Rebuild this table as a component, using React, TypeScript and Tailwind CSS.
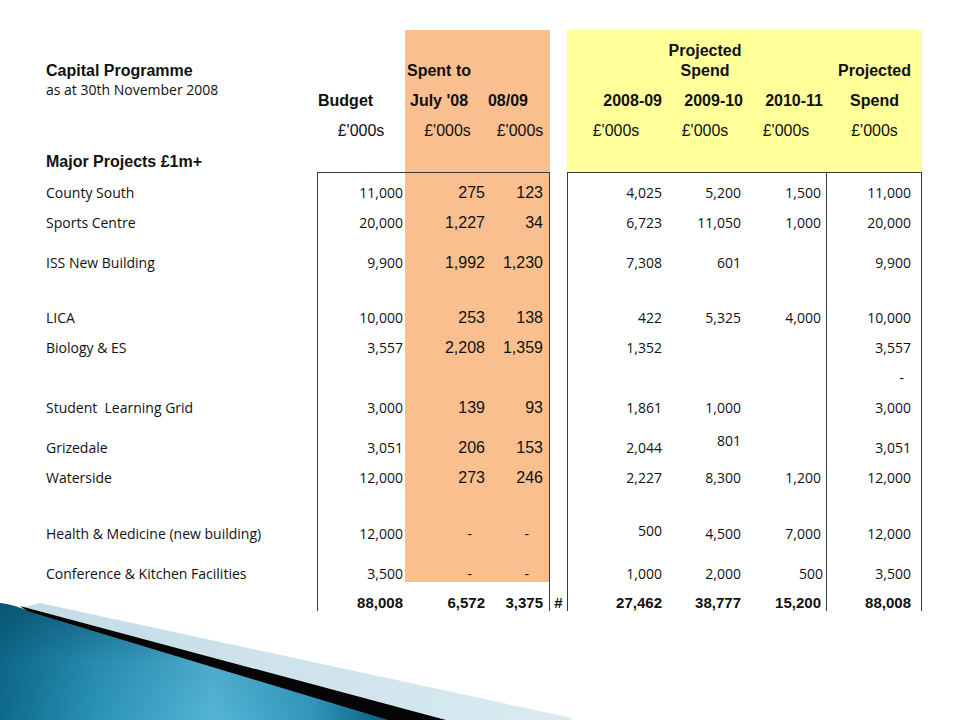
import React from 'react';

const COLS = 'grid grid-cols-[271px_88px_85px_60px_17px_98px_80px_82px_95px]';
const ARIAL = "font-['Liberation_Sans',Arial,sans-serif]";
const CAL = "font-['Open_Sans',sans-serif]";
const OR = 'bg-[#f9bf8f]';
const YE = 'bg-[#ffff99]';
const LINE = 'border-[#3a3a3a]';

type Row = {
  label: string;
  h: string;
  v: string[];
  pad?: Record<number, string>;
  pb?: Record<number, string>;
};

const rows: Row[] = [
  { label: 'County South', h: 'h-[29px]', v: ['11,000', '275', '123', '4,025', '5,200', '1,500', '11,000'] },
  { label: 'Sports Centre', h: 'h-[30px]', v: ['20,000', '1,227', '34', '6,723', '11,050', '1,000', '20,000'] },
  { label: 'ISS New Building', h: 'h-[40px]', v: ['9,900', '1,992', '1,230', '7,308', '601', '', '9,900'] },
  { label: 'LICA', h: 'h-[55px]', v: ['10,000', '253', '138', '422', '5,325', '4,000', '10,000'] },
  { label: 'Biology & ES', h: 'h-[30px]', v: ['3,557', '2,208', '1,359', '1,352', '', '', '3,557'] },
  { label: '', h: 'h-[30px]', v: ['', '', '', '', '', '', '-'], pad: { 6: 'pr-[17px]' } },
  { label: 'Student  Learning Grid', h: 'h-[30px]', v: ['3,000', '139', '93', '1,861', '1,000', '', '3,000'] },
  { label: 'Grizedale', h: 'h-[40px]', v: ['3,051', '206', '153', '2,044', '801', '', '3,051'], pb: { 4: 'pb-[7px]' } },
  { label: 'Waterside', h: 'h-[30px]', v: ['12,000', '273', '246', '2,227', '8,300', '1,200', '12,000'] },
  {
    label: 'Health & Medicine (new building)',
    h: 'h-[56px]',
    v: ['12,000', '-', '-', '500', '4,500', '7,000', '12,000'],
    pad: { 1: 'pr-[18px]', 2: 'pr-[20px]' },
    pb: { 3: 'pb-[3px]' },
  },
  {
    label: 'Conference & Kitchen Facilities',
    h: 'h-[40px]',
    v: ['3,500', '-', '-', '1,000', '2,000', '500', '3,500'],
    pad: { 1: 'pr-[18px]', 2: 'pr-[20px]', 5: 'pr-[3px]' },
  },
];

const basePad = ['pr-[2px]', 'pr-[5px]', 'pr-[6px]', 'pr-[3px]', 'pr-[4px]', 'pr-[5px]', 'pr-[10px]'];
const colCls = [
  `border-l ${LINE}`,
  OR,
  `${OR} border-r ${LINE}`,
  `border-l ${LINE}`,
  '',
  `border-r ${LINE}`,
  `border-r ${LINE}`,
];

function BodyRow({ r, first }: { r: Row; first: boolean }) {
  const cells = r.v.map((val, i) => {
    const pad = r.pad && r.pad[i] ? r.pad[i] : basePad[i];
    const pb = r.pb && r.pb[i] ? r.pb[i] : '';
    const big = (i === 1 || i === 2) && val !== '-';
    const font = big ? `${ARIAL} text-[16px]` : `${CAL} text-[14px]`;
    const top = first ? `border-t ${LINE}` : '';
    return (
      <div
        key={i}
        className={`flex items-end justify-end leading-[16px] text-[#111] ${colCls[i]} ${top} ${pad} ${pb} ${font}`}
      >
        <span>{val}</span>
      </div>
    );
  });
  return (
    <div className={`${COLS} ${r.h}`}>
      <div className={`flex items-end leading-[16px] text-[14px] text-[#111] whitespace-pre ${CAL}`}>
        <span>{r.label}</span>
      </div>
      {cells.slice(0, 3)}
      <div />
      {cells.slice(3)}
    </div>
  );
}

function TotalRow() {
  const v = ['88,008', '6,572', '3,375', '27,462', '38,777', '15,200', '88,008'];
  const cls = [
    `border-l ${LINE}`,
    '',
    `border-r ${LINE}`,
    `border-l ${LINE}`,
    '',
    `border-r ${LINE}`,
    `border-r ${LINE}`,
  ];
  const cells = v.map((val, i) => (
    <div key={i} className={`flex items-end justify-end leading-[16px] ${cls[i]} ${basePad[i]}`}>
      <span>{val}</span>
    </div>
  ));
  return (
    <div className={`${COLS} h-[30px] ${ARIAL} text-[15px] font-bold text-[#111] pb-[1px]`}>
      <div />
      {cells.slice(0, 3)}
      <div className="flex items-end justify-center leading-[16px]">
        <span>#</span>
      </div>
      {cells.slice(3)}
    </div>
  );
}

function Header() {
  const b = `${ARIAL} font-bold text-[16px] leading-[20px] text-[#111]`;
  const r = `${ARIAL} text-[16px] leading-[20px] text-[#111]`;
  return (
    <div className={`${COLS}`}>
      {/* Row A */}
      <div className="h-[31px]" />
      <div />
      <div className={OR} />
      <div className={OR} />
      <div />
      <div className={YE} />
      <div className={`${YE} flex items-end justify-center ${b}`}>Projected</div>
      <div className={YE} />
      <div className={YE} />
      {/* Row B */}
      <div className={`h-[20px] flex items-end ${b}`}>Capital Programme</div>
      <div />
      <div className={`${OR} flex items-end pl-[2px] ${b}`}>Spent to</div>
      <div className={OR} />
      <div />
      <div className={YE} />
      <div className={`${YE} flex items-end justify-center ${b}`}>Spend</div>
      <div className={YE} />
      <div className={`${YE} flex items-end justify-center ${b}`}>Projected</div>
      {/* Row C */}
      <div className={`h-[30px] flex items-start ${CAL} text-[14px] leading-[18px] text-[#111]`}>
        as at 30th November 2008
      </div>
      <div className={`flex items-end pl-[1px] ${b}`}>Budget</div>
      <div className={`${OR} flex items-end pl-[5px] ${b}`}>July &apos;08</div>
      <div className={`${OR} flex items-end justify-end pr-[22px] whitespace-nowrap ${b}`}>08/09</div>
      <div />
      <div className={`${YE} flex items-end justify-end pr-[3px] ${b}`}>2008-09</div>
      <div className={`${YE} flex items-end justify-end pr-[2px] ${b}`}>2009-10</div>
      <div className={`${YE} flex items-end justify-end pr-[4px] ${b}`}>2010-11</div>
      <div className={`${YE} flex items-end justify-center ${b}`}>Spend</div>
      {/* Row D */}
      <div className="h-[30px]" />
      <div className={`flex items-end justify-center ${r}`}>£&apos;000s</div>
      <div className={`${OR} flex items-end justify-center ${r}`}>£&apos;000s</div>
      <div className={`${OR} flex items-end justify-center ${r}`}>£&apos;000s</div>
      <div />
      <div className={`${YE} flex items-end justify-center ${r}`}>£&apos;000s</div>
      <div className={`${YE} flex items-end justify-center ${r}`}>£&apos;000s</div>
      <div className={`${YE} flex items-end justify-center ${r}`}>£&apos;000s</div>
      <div className={`${YE} flex items-end justify-center ${r}`}>£&apos;000s</div>
      {/* Row E */}
      <div className={`h-[31px] flex items-end whitespace-nowrap ${b}`}>Major Projects £1m+</div>
      <div />
      <div className={OR} />
      <div className={OR} />
      <div />
      <div className={YE} />
      <div className={YE} />
      <div className={YE} />
      <div className={YE} />
    </div>
  );
}

function Swoosh() {
  return (
    <svg
      className="absolute left-0 bottom-0"
      width="580"
      height="125"
      viewBox="0 0 580 125"
      aria-hidden="true"
    >
      <defs>
        <linearGradient id="blueG" x1="0" y1="0" x2="1" y2="0">
          <stop offset="0" stopColor="#0e6a8b" />
          <stop offset="0.25" stopColor="#2a93b8" />
          <stop offset="0.55" stopColor="#55b5d6" />
          <stop offset="0.8" stopColor="#3299bd" />
          <stop offset="1" stopColor="#0b5d7e" />
        </linearGradient>
        <linearGradient id="shadeG" x1="0" y1="0" x2="0" y2="1">
          <stop offset="0" stopColor="#06435c" stopOpacity="0.55" />
          <stop offset="0.5" stopColor="#06435c" stopOpacity="0.1" />
          <stop offset="1" stopColor="#06435c" stopOpacity="0" />
        </linearGradient>
        <linearGradient id="lightG" x1="0" y1="0" x2="1" y2="0">
          <stop offset="0" stopColor="#c3dce7" />
          <stop offset="1" stopColor="#dbeaf1" />
        </linearGradient>
      </defs>
      <path d="M40,8 L572,123 L572,125 L445,125 L24,12 Z" fill="url(#lightG)" />
      <path d="M20,11 L446,125 L386,125 L28,17 Z" fill="#050505" />
      <path d="M0,8 Q16,10 30,17 L388,125 L0,125 Z" fill="url(#blueG)" />
      <path d="M0,8 Q16,10 30,17 L388,125 L0,125 Z" fill="url(#shadeG)" />
    </svg>
  );
}

export default function App() {
  return (
    <div className="relative w-[960px] h-[720px] overflow-hidden bg-white">
      <div className="pt-[30px] pl-[46px]">
        <Header />
        {rows.map((r, i) => (
          <BodyRow key={i} r={r} first={i === 0} />
        ))}
        <TotalRow />
      </div>
      <Swoosh />
    </div>
  );
}
